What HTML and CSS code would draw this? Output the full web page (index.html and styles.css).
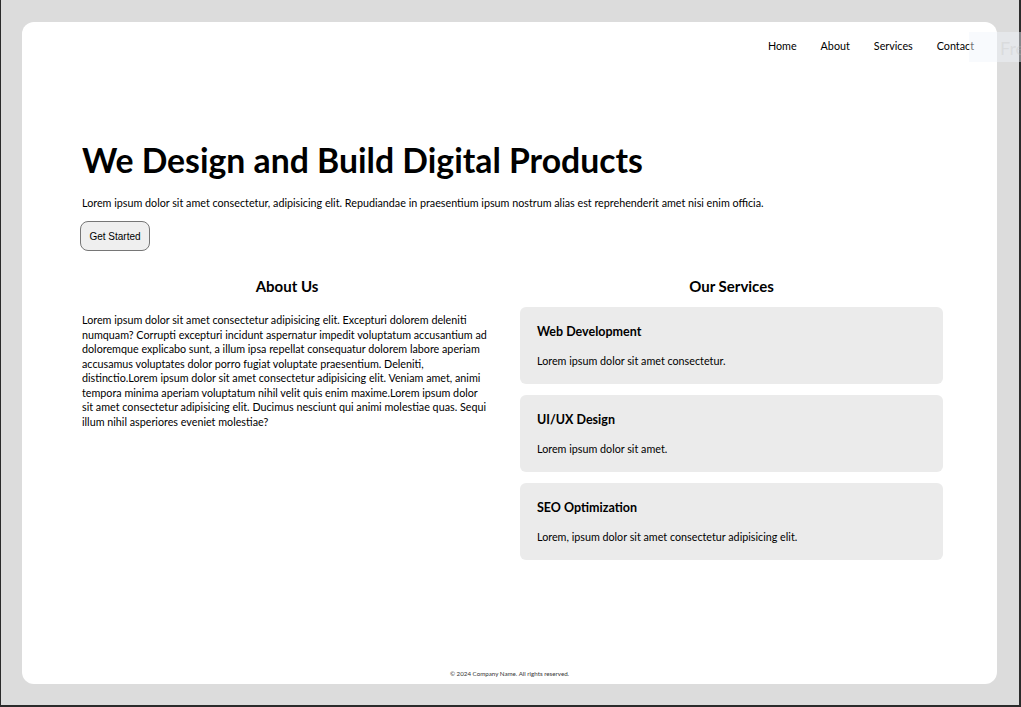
FILE: index.html
```html
<!DOCTYPE html>
<html lang="en">
<head>
<meta charset="utf-8">
<title>Digital Products</title>
<link rel="stylesheet" href="styles.css">
</head>
<body>
<div class="page">
  <header class="topbar">
    <nav class="nav">
      <a href="#">Home</a>
      <a href="#">About</a>
      <a href="#">Services</a>
      <a href="#">Contact</a>
    </nav>
  </header>
  <main class="main">
    <section class="hero">
      <h1>We Design and Build Digital Products</h1>
      <p>Lorem ipsum dolor sit amet consectetur, adipisicing elit. Repudiandae in praesentium ipsum nostrum alias est reprehenderit amet nisi enim officia.</p>
      <button class="cta" type="button">Get Started</button>
    </section>
    <section class="columns">
      <div class="about">
        <h2>About Us</h2>
        <p>Lorem ipsum dolor sit amet consectetur adipisicing elit. Excepturi dolorem deleniti numquam? Corrupti excepturi incidunt aspernatur impedit voluptatum accusantium ad doloremque explicabo sunt, a illum ipsa repellat consequatur dolorem labore aperiam accusamus voluptates dolor porro fugiat voluptate praesentium. Deleniti, distinctio.Lorem ipsum dolor sit amet consectetur adipisicing elit. Veniam amet, animi tempora minima aperiam voluptatum nihil velit quis enim maxime.Lorem ipsum dolor sit amet consectetur adipisicing elit. Ducimus nesciunt qui animi molestiae quas. Sequi illum nihil asperiores eveniet molestiae?</p>
      </div>
      <div class="services">
        <h2>Our Services</h2>
        <div class="card">
          <h3>Web Development</h3>
          <p>Lorem ipsum dolor sit amet consectetur.</p>
        </div>
        <div class="card">
          <h3>UI/UX Design</h3>
          <p>Lorem ipsum dolor sit amet.</p>
        </div>
        <div class="card">
          <h3>SEO Optimization</h3>
          <p>Lorem, ipsum dolor sit amet consectetur adipisicing elit.</p>
        </div>
      </div>
    </section>
  </main>
  <footer class="footer">© 2024 Company Name. All rights reserved.</footer>
</div>
<div class="ghost">Free</div>
</body>
</html>
```
FILE: styles.css
```css
* { box-sizing: border-box; }
html, body { margin: 0; }
body {
  height: 707px;
  overflow: hidden;
  background: #dcdcdc;
  border-left: 1px solid #2b2b2b;
  border-right: 2px solid #2b2b2b;
  border-bottom: 2px solid #2b2b2b;
  padding: 22px 22px 21px 21px;
  font-family: Lato, "Segoe UI", sans-serif;
  color: #000;
}
.page {
  height: 662px;
  background: #fff;
  border-radius: 12px;
  display: flex;
  flex-direction: column;
}
.topbar {
  display: flex;
  justify-content: flex-end;
  padding: 17px 23px 0 0;
  height: 50px;
}
.nav { display: flex; gap: 24px; }
.nav a {
  color: #000;
  text-decoration: none;
  font-size: 10.75px;
  line-height: 14px;
}
.main {
  flex: 1;
  padding: 0 53px 0 60px;
}
.hero { padding-top: 68px; }
.hero h1 {
  margin: 0;
  font-size: 33.75px;
  font-weight: 700;
  line-height: 40px;
}
.hero p {
  margin: 15px 0 0;
  font-size: 10.75px;
  line-height: 15px;
}
.cta {
  margin: 11px 0 0 -2px;
  width: 70px;
  height: 30px;
  padding: 0;
  border: 1px solid #767676;
  border-radius: 8px;
  background: #efefef;
  font-family: "Liberation Sans", Arial, sans-serif;
  font-size: 10px;
  color: #000;
}
.columns {
  margin-top: 25px;
  display: grid;
  grid-template-columns: 410px 423px;
  column-gap: 28px;
  align-items: start;
}
.columns h2 {
  margin: 0;
  text-align: center;
  font-size: 15px;
  line-height: 20px;
  font-weight: 700;
}
.about p {
  margin: 17px 3px 0 0;
  font-size: 10.75px;
  line-height: 14.5px;
}
.services { display: flex; flex-direction: column; }
.card {
  margin-top: 11px;
  background: #ebebeb;
  border-radius: 6px;
  padding: 16px 17px 15px;
  height: 77px;
}
.card h3 {
  margin: 0;
  font-size: 12.5px;
  line-height: 17px;
  font-weight: 700;
}
.card p {
  margin: 13px 0 0;
  font-size: 10.75px;
  line-height: 15px;
}
.footer {
  text-align: center;
  font-size: 6.2px;
  color: #333;
  padding-bottom: 6px;
  line-height: 9px;
}
.ghost {
  position: absolute;
  top: 32px;
  left: 969px;
  width: 80px;
  height: 30px;
  padding: 5px 0 0 31px;
  background: rgba(240, 244, 250, 0.45);
  color: rgba(190, 190, 190, 0.3);
  font-family: Lato, sans-serif;
  font-size: 18px;
}
```
